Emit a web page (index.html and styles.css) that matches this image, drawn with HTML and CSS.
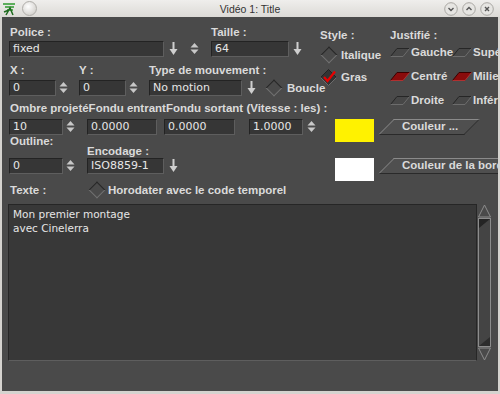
FILE: index.html
```html
<!DOCTYPE html>
<html lang="fr">
<head>
    <meta charset="UTF-8">
    <meta name="viewport" content="width=device-width, initial-scale=1.0">
    <title>Vidéo 1: Title</title>
    <link rel="stylesheet" href="styles.css">
</head>
<body>
    <!-- Icônes réutilisées -->
    <svg class="defs" width="0" height="0">
        <defs>
            <symbol id="arrow-down" viewBox="0 0 9 16">
                <rect x="3.5" y="1" width="2" height="8" fill="#cfcfcf"/>
                <polygon points="0.5,8 8.5,8 4.5,14" fill="#cfcfcf"/>
            </symbol>
            <symbol id="updown" viewBox="0 0 9 16">
                <polygon points="0.5,6.5 8.5,6.5 4.5,2" fill="#c8c8c8"/>
                <polygon points="0.5,8.5 8.5,8.5 4.5,13" fill="#c8c8c8"/>
            </symbol>
            <symbol id="para" viewBox="0 0 20 9">
                <polygon points="7,0.5 19.5,0.5 13,8.5 0.5,8.5" fill="#474747"/>
                <polyline points="0.5,8.5 7,0.5 19.5,0.5" fill="none" stroke="#262626"/>
                <polyline points="19.5,0.5 13,8.5 0.5,8.5" fill="none" stroke="#6c6c6c"/>
            </symbol>
            <symbol id="para-on" viewBox="0 0 20 9">
                <polygon points="7,0.5 19.5,0.5 13,8.5 0.5,8.5" fill="#8a0c0c"/>
                <polyline points="0.5,8.5 7,0.5 19.5,0.5" fill="none" stroke="#3a0000"/>
                <polyline points="19.5,0.5 13,8.5 0.5,8.5" fill="none" stroke="#b03030"/>
            </symbol>
        </defs>
    </svg>

    <!-- Barre de titre -->
    <div class="titlebar">
        <div class="tb-left">
            <svg class="app-icon" width="14" height="14" viewBox="0 0 14 14">
                <path d="M1 2 L13 2 M3 5 L12 5 M5 8 L11 8" stroke="#2f9a2f" stroke-width="1.5"/>
                <path d="M4 13 L8 6 L11 13 M2 10 L7 8" stroke="#1f6a1f" stroke-width="1.5" fill="none"/>
            </svg>
            <span class="tb-ball"></span>
        </div>
        <div class="tb-title">Vidéo 1: Title</div>
        <div class="tb-right">
            <svg class="tb-btn" width="14" height="14" viewBox="0 0 14 14">
                <circle cx="7" cy="7" r="6.3" class="tb-circle"/>
                <path d="M4.5 6 L7 8.5 L9.5 6" class="tb-glyph"/>
            </svg>
            <svg class="tb-btn" width="14" height="14" viewBox="0 0 14 14">
                <circle cx="7" cy="7" r="6.3" class="tb-circle"/>
                <path d="M4.5 8 L7 5.5 L9.5 8" class="tb-glyph"/>
            </svg>
            <svg class="tb-btn" width="14" height="14" viewBox="0 0 14 14">
                <circle cx="7" cy="7" r="6.3" class="tb-circle"/>
                <path d="M5 5 L9 9 M9 5 L5 9" class="tb-glyph"/>
            </svg>
        </div>
    </div>

    <div class="window">
        <!-- Haut : police, position, style et justification -->
        <div class="top">
            <div class="left">
                <div class="labels">
                    <span class="lbl w-police">Police :</span>
                    <span class="lbl">Taille :</span>
                </div>
                <div class="controls">
                    <div class="input w155">fixed</div>
                    <svg class="icon ml5"><use href="#arrow-down"/></svg>
                    <svg class="icon ml12"><use href="#updown"/></svg>
                    <div class="input w78 ml12">64</div>
                    <svg class="icon ml4"><use href="#arrow-down"/></svg>
                </div>

                <div class="labels row2">
                    <span class="lbl w-x">X :</span>
                    <span class="lbl w-y">Y :</span>
                    <span class="lbl">Type de mouvement :</span>
                </div>
                <div class="controls mt3">
                    <div class="input w47">0</div>
                    <svg class="icon ml3"><use href="#updown"/></svg>
                    <div class="input w47 ml11">0</div>
                    <svg class="icon ml3"><use href="#updown"/></svg>
                    <div class="input w93 ml11">No motion</div>
                    <svg class="icon ml5"><use href="#arrow-down"/></svg>
                    <span class="diamond ml9"></span>
                    <span class="lbl ml5">Boucle</span>
                </div>
            </div>

            <div class="style-col">
                <span class="lbl">Style :</span>
                <div class="opt">
                    <span class="diamond"></span>
                    <span class="lbl">Italique</span>
                </div>
                <div class="opt">
                    <svg class="check" width="19" height="17" viewBox="0 0 19 17">
                        <polygon points="8.5,0.5 16.5,8.5 8.5,16.5 0.5,8.5" fill="#333"/>
                        <polyline points="0.5,8.5 8.5,0.5 16.5,8.5" fill="none" stroke="#222"/>
                        <polyline points="16.5,8.5 8.5,16.5 0.5,8.5" fill="none" stroke="#6c6c6c"/>
                        <path d="M4 8 L7.5 12 L15 2.5" fill="none" stroke="#e80000" stroke-width="2.2"/>
                    </svg>
                    <span class="lbl">Gras</span>
                </div>
            </div>

            <div class="justify-col">
                <span class="lbl">Justifié :</span>
                <div class="justify-grid">
                    <div class="jopt"><svg class="para"><use href="#para"/></svg><span class="lbl">Gauche</span></div>
                    <div class="jopt"><svg class="para"><use href="#para"/></svg><span class="lbl">Supérieur</span></div>
                    <div class="jopt"><svg class="para"><use href="#para-on"/></svg><span class="lbl">Centré</span></div>
                    <div class="jopt"><svg class="para"><use href="#para-on"/></svg><span class="lbl">Milieu</span></div>
                    <div class="jopt"><svg class="para"><use href="#para"/></svg><span class="lbl">Droite</span></div>
                    <div class="jopt"><svg class="para"><use href="#para"/></svg><span class="lbl">Inférieur</span></div>
                </div>
            </div>
        </div>

        <!-- Ombre / fondus / couleur -->
        <div class="labels">
            <span class="lbl">Ombre projetéFondu entrantFondu sortant (Vitesse : les) :</span>
        </div>
        <div class="controls mt4">
            <div class="input w54">10</div>
            <svg class="icon ml3"><use href="#updown"/></svg>
            <div class="input w70 ml12">0.0000</div>
            <div class="input w71 ml7">0.0000</div>
            <div class="input w54 ml14">1.0000</div>
            <svg class="icon ml4"><use href="#updown"/></svg>
            <span class="swatch yellow sw1"></span>
            <span class="cbtn">Couleur ...</span>
        </div>

        <!-- Contour / encodage / couleur de la bordure -->
        <div class="labels row4">
            <span class="lbl w-outline">Outline:</span>
            <span class="lbl enc">Encodage :</span>
        </div>
        <div class="controls mt1">
            <div class="input w54">0</div>
            <svg class="icon ml3"><use href="#updown"/></svg>
            <div class="input w77 ml12">ISO8859-1</div>
            <svg class="icon ml5"><use href="#arrow-down"/></svg>
            <span class="swatch white sw2"></span>
            <span class="cbtn wide">Couleur de la bordure</span>
        </div>

        <!-- Texte -->
        <div class="text-row">
            <span class="lbl w-texte">Texte :</span>
            <span class="diamond"></span>
            <span class="lbl ml3">Horodater avec le code temporel</span>
        </div>

        <div class="editor">
            <div class="textarea">Mon premier montage<br>avec Cinelerra</div>
            <svg class="scrollbar" width="15" height="157" viewBox="0 0 15 157">
                <polygon points="7.5,1 13.5,13 1.5,13" fill="#4a4a4a" stroke="#8c8c8c"/>
                <rect x="1.5" y="14.5" width="12" height="128" fill="#444" stroke="#8c8c8c"/>
                <polygon points="2,15 13,15 2,24" fill="#242424"/>
                <polygon points="13,133 13,142 2,142" fill="#2c2c2c"/>
                <polygon points="1.5,144 13.5,144 7.5,156" fill="#4a4a4a" stroke="#8c8c8c"/>
            </svg>
        </div>
    </div>
</body>
</html>
```

FILE: styles.css
```css
/* Fenêtre de titre façon Cinelerra */
body {
    margin: 0;
    width: 500px;
    height: 394px;
    overflow: hidden;
    font-family: "Liberation Sans", Arial, sans-serif;
    background-color: #4a4a4a;
}

.defs {
    position: absolute;
}

/* Barre de titre */
.titlebar {
    height: 17px;
    display: grid;
    grid-template-columns: 1fr auto 1fr;
    align-items: center;
    background: linear-gradient(#efeeec, #dcdad6);
}

.tb-left {
    display: flex;
    align-items: center;
    gap: 6px;
    padding-left: 2px;
}

.tb-ball {
    width: 13px;
    height: 13px;
    border-radius: 50%;
    border: 1px solid #b0aeaa;
    background: radial-gradient(circle at 40% 35%, #ffffff, #d8d6d2 70%, #bdbbb7);
}

.tb-title {
    font-size: 10.5px;
    color: #333;
}

.tb-right {
    display: flex;
    justify-content: flex-end;
    gap: 4px;
    padding-right: 6px;
}

.tb-circle {
    fill: #e6e5e2;
    stroke: #a9a7a3;
}

.tb-glyph {
    fill: none;
    stroke: #555;
    stroke-width: 1.4;
}

/* Corps de la fenêtre */
.window {
    box-sizing: border-box;
    height: 377px;
    padding: 8px 0 0 7px;
    border: 0 solid #d5d3cf;
    border-width: 0 2px 3px 2px;
    background-color: #4a4a4a;
    overflow: hidden;
}

.lbl {
    font-size: 11.5px;
    font-weight: bold;
    line-height: 14px;
    color: #dadada;
    white-space: nowrap;
}

.top {
    display: flex;
    height: 76px;
}

.left {
    width: 311px;
    flex-shrink: 0;
}

.labels {
    display: flex;
    align-items: flex-start;
    padding-left: 1px;
}

.row2 {
    margin-top: 6px;
}

.row4 {
    height: 22px;
}

.row4 .lbl {
    line-height: 12px;
}

.w-police { width: 201px; }
.w-x { width: 69px; }
.w-y { width: 70px; }
.w-outline { width: 77px; }
.enc { margin-top: 10px; }

.controls {
    display: flex;
    align-items: flex-start;
    margin-top: 2px;
}

.controls > * {
    flex-shrink: 0;
}

.controls .lbl {
    line-height: 16px;
}

.mt1 { margin-top: 1px; }
.mt3 { margin-top: 3px; }
.mt4 { margin-top: 4px; }

.ml3 { margin-left: 3px; }
.ml4 { margin-left: 4px; }
.ml5 { margin-left: 5px; }
.ml7 { margin-left: 7px; }
.ml9 { margin-left: 9px; }
.ml11 { margin-left: 11px; }
.ml12 { margin-left: 12px; }
.ml14 { margin-left: 14px; }

/* Champs de saisie */
.input {
    box-sizing: border-box;
    height: 16px;
    padding-left: 3px;
    font-family: "DejaVu Sans", sans-serif;
    font-size: 11px;
    line-height: 14px;
    color: #e6e6e6;
    background-color: #363636;
    border: 1px solid;
    border-color: #232323 #5e5e5e #5e5e5e #232323;
    white-space: nowrap;
    overflow: hidden;
}

.w47 { width: 47px; }
.w54 { width: 54px; }
.w70 { width: 70px; }
.w71 { width: 71px; }
.w77 { width: 77px; }
.w78 { width: 78px; }
.w93 { width: 93px; }
.w155 { width: 155px; }

.icon {
    width: 9px;
    height: 16px;
}

/* Cases à cocher en losange */
.diamond {
    width: 17px;
    height: 16px;
    display: flex;
    align-items: center;
    justify-content: center;
    flex-shrink: 0;
}

.diamond::before {
    content: "";
    width: 10px;
    height: 10px;
    transform: rotate(45deg);
    border: 1px solid;
    border-color: #262626 #727272 #727272 #262626;
}

/* Colonne Style */
.style-col {
    width: 69px;
    flex-shrink: 0;
}

.opt {
    height: 22px;
    display: flex;
    align-items: center;
    gap: 4px;
}

.opt:first-of-type {
    margin-top: 1px;
}

.check {
    margin-right: -2px;
}

/* Colonne Justifié */
.justify-col {
    flex: 1;
    padding-left: 1px;
}

.justify-grid {
    display: grid;
    grid-template-columns: 62px 62px;
    grid-auto-rows: 24px;
    margin-top: -3px;
}

.jopt {
    display: flex;
    align-items: center;
    gap: 1px;
}

.para {
    width: 20px;
    height: 9px;
    flex-shrink: 0;
}

/* Couleurs */
.swatch {
    width: 39px;
    height: 23px;
}

.sw1 {
    margin-left: 19px;
    margin-bottom: -7px;
}

.sw2 {
    margin-left: 157px;
}

.yellow { background-color: #fff200; }
.white { background-color: #ffffff; }

.cbtn {
    position: relative;
    isolation: isolate;
    box-sizing: border-box;
    width: 103px;
    height: 16px;
    margin-left: 4px;
    padding-left: 24px;
    font-size: 11.5px;
    font-weight: bold;
    line-height: 14px;
    color: #dadada;
    white-space: nowrap;
}

.cbtn::before {
    content: "";
    position: absolute;
    top: 0;
    bottom: 0;
    left: 8px;
    right: 9px;
    z-index: -1;
    transform: skewX(-45deg);
    background-color: #4f4f4f;
    border: 1px solid;
    border-color: #8a8a8a #2a2a2a #2a2a2a #8a8a8a;
}

.cbtn.wide {
    width: 160px;
}

/* Ligne Texte */
.text-row {
    display: flex;
    align-items: center;
    height: 16px;
    margin-top: 1px;
    padding-left: 1px;
}

.w-texte {
    width: 78px;
}

/* Zone de texte */
.editor {
    display: flex;
    margin-top: 6px;
    margin-left: -1px;
}

.textarea {
    box-sizing: border-box;
    width: 469px;
    height: 157px;
    padding: 2px 4px;
    font-family: "DejaVu Sans", sans-serif;
    font-size: 10.5px;
    line-height: 14px;
    color: #e6e6e6;
    background-color: #383838;
    border: 1px solid;
    border-color: #262626 #262626 #5e5e5e #262626;
}

.scrollbar {
    flex-shrink: 0;
}
```
